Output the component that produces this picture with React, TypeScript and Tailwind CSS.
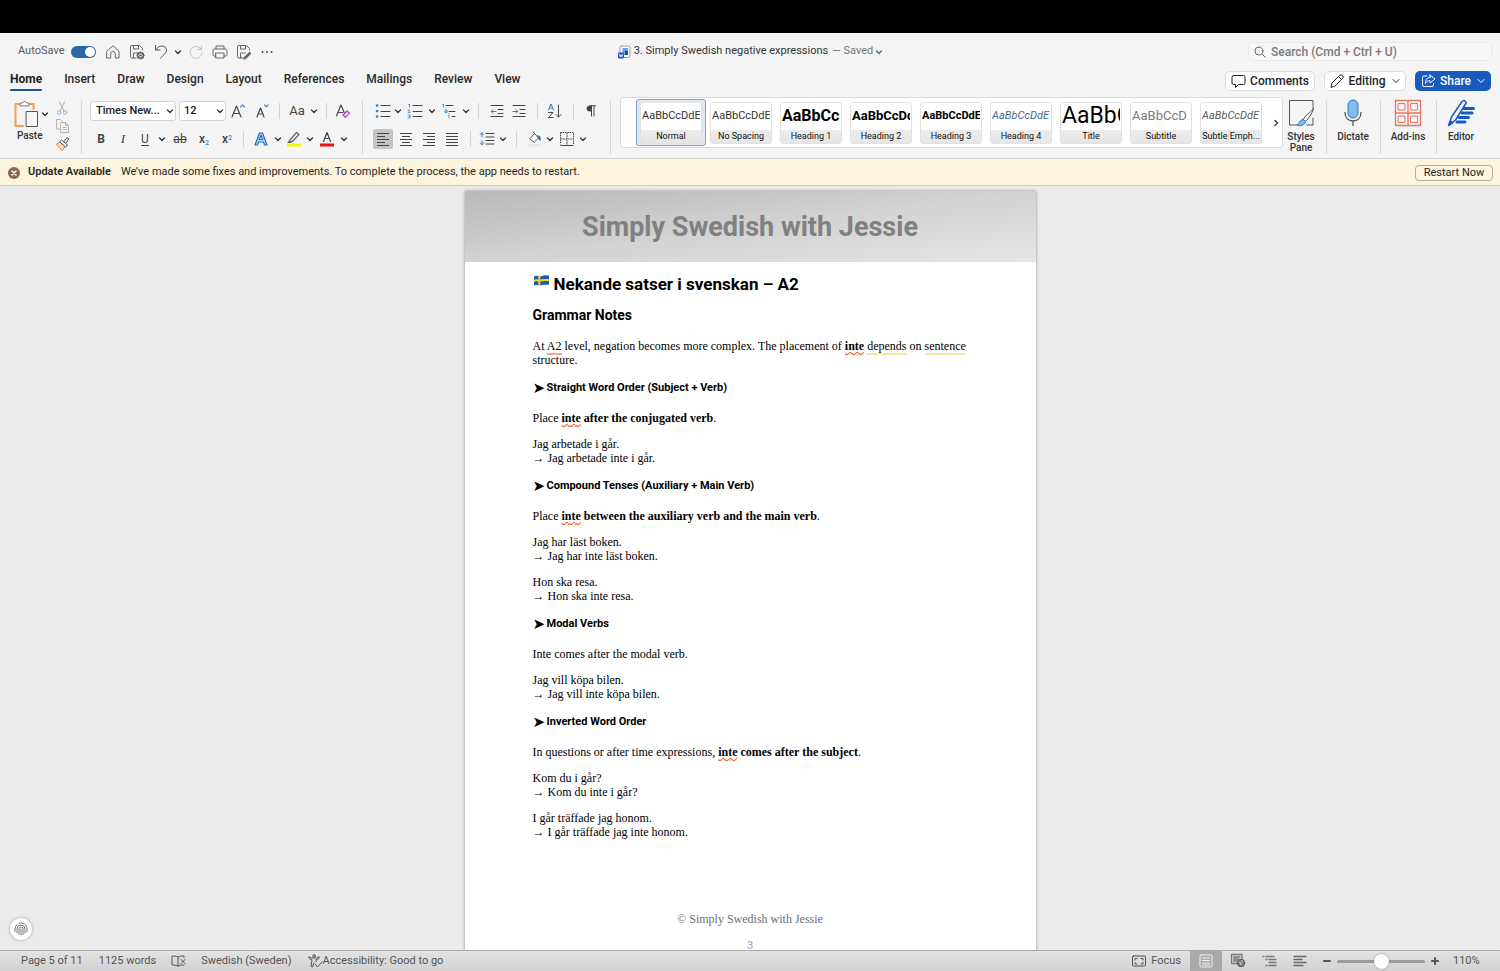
import type { ReactNode } from "react";
import clsx from "clsx";

type IconProps = {
  w?: number;
  h?: number;
  className?: string;
  children: ReactNode;
};

function Icon({ w = 16, h = 16, className, children }: IconProps) {
  return (
    <svg width={w} height={h} viewBox={`0 0 ${w} ${h}`} fill="none" stroke="currentColor" strokeLinecap="round" strokeLinejoin="round" className={clsx("shrink-0", className)} aria-hidden="true">
      {children}
    </svg>
  );
}

function Chevron({ className = "text-[#333]" }: { className?: string }) {
  return (
    <Icon w={8} h={8} className={className}>
      <path d="M1.500 3l2.500 2.500L6.500 3" strokeWidth="1.300" />
    </Icon>
  );
}

type CellProps = {
  label: string;
  className: string;
  children: ReactNode;
};

function Cell({ label, className, children }: CellProps) {
  return (
    <button type="button" aria-label={label} className={clsx("flex h-5 shrink-0 items-center justify-center text-[#444]", className)}>
      {children}
    </button>
  );
}

function Drop({ label, className }: { label: string; className: string }) {
  return (
    <Cell label={label} className={className}>
      <Chevron />
    </Cell>
  );
}

function Split({ className }: { className: string }) {
  return (
    <div className={clsx("flex shrink-0 justify-center", className)}>
      <div className="h-4 w-px bg-[#d2d2d2]" />
    </div>
  );
}

function GroupRule({ className }: { className: string }) {
  return (
    <div className={clsx("flex shrink-0 justify-center", className)}>
      <div className="mt-1 h-[54px] w-px bg-[#d8d8d8]" />
    </div>
  );
}

function Floppy() {
  return <path d="M13.500 6V4.500l-3-3H3A1.500 1.500 0 0 0 1.500 3v9.500A1.500 1.500 0 0 0 3 14h4M4.500 1.500V5h5V1.500M4.500 14V9h5" />;
}

function TitleBar() {
  return (
    <div className="grid h-[33px] shrink-0 grid-cols-[1fr_auto_1fr] items-center px-2 pt-1">
      <div className="flex items-center pl-[10px] text-[#5c5c5c]">
        <label htmlFor="autosave" className="w-[53px] text-[11px]">AutoSave</label>
        <span className="relative flex h-3 w-[25px] items-center">
          <input id="autosave" type="checkbox" role="switch" defaultChecked className="h-3 w-[25px] appearance-none rounded-full bg-[#2b66a8]" />
          <span className="pointer-events-none absolute right-px h-[10px] w-[10px] rounded-full bg-white" />
        </span>
        <Cell label="Home" className="ml-2 w-[18px]">
          <Icon className="text-[#666]"><path d="M2 7l6-5.300L14 7v7h-3.700V9.800a2.300 2.300 0 0 0-4.600 0V14H2z" /></Icon>
        </Cell>
        <Cell label="Save" className="ml-[6px] w-[18px]">
          <Icon className="text-[#666]">
            <Floppy />
            <circle cx="11.500" cy="11.500" r="3.500" fill="#666" />
            <path d="M9.800 11.300a1.800 1.800 0 0 1 3.200-.6M13.200 11.700a1.800 1.800 0 0 1-3.200.6" stroke="#fff" strokeWidth=".9" />
          </Icon>
        </Cell>
        <Cell label="Undo" className="ml-[6px] w-[18px]">
          <Icon className="text-[#555]"><path d="M2.500 1.500V6H7M2.500 6c2-2.500 4-4 6.500-4s4.500 2 4.500 4.200c0 2.300-2.500 4.500-6 7.800" /></Icon>
        </Cell>
        <Drop label="Undo history" className="ml-[2px] w-3" />
        <Cell label="Redo" className="ml-[3px] w-[18px]">
          <Icon className="text-[#c6c6c6]"><path d="M13.500 2v3.500H10M13.300 5.500A6 6 0 1 0 14 9" /></Icon>
        </Cell>
        <Cell label="Print" className="ml-[6px] w-[18px]">
          <Icon className="text-[#666]"><path d="M4 5V2h8v3M4 12H2.500A1.500 1.500 0 0 1 1 10.500v-4A1.500 1.500 0 0 1 2.500 5h11A1.500 1.500 0 0 1 15 6.500v4a1.500 1.500 0 0 1-1.500 1.500H12M4 9h8v5H4z" /></Icon>
        </Cell>
        <Cell label="Save as" className="ml-[6px] w-[18px]">
          <Icon className="text-[#666]">
            <Floppy />
            <path d="M8.500 13.500l5-5 1 1-5 5-1.700.4z" fill="#555" strokeWidth="1.300" />
          </Icon>
        </Cell>
        <Cell label="More" className="ml-[5px] w-[18px]">
          <Icon w={14} h={4}><path d="M2.500 2h.1M7 2h.1M11.500 2h.1" strokeWidth="1.800" /></Icon>
        </Cell>
      </div>
      <button type="button" className="flex items-center text-[11px] text-[#333]">
        <Icon w={14} h={14} className="mr-[3px]">
          <rect x="3" y="1" width="10" height="11.500" rx="1.500" fill="#fff" stroke="#9a9a9a" />
          <path d="M5.500 3h5.500v7H5.500z" fill="#5ea5ee" stroke="none" />
          <path d="M8 6h3v4H8z" fill="#1b4fb0" stroke="none" />
          <rect x="1" y="7.500" width="6" height="6" rx="1" fill="#1c59c4" stroke="none" />
          <path d="M2.300 9.300l.8 2.500.9-2 .9 2 .8-2.500" stroke="#fff" strokeWidth=".8" />
        </Icon>
        <span>3. Simply Swedish negative expressions</span>
        <span className="ml-1 text-[#777]">— Saved</span>
        <Chevron className="ml-[2px] text-[#666]" />
      </button>
      <label className="flex h-[19px] w-[244px] items-center justify-self-end rounded-[5px] border border-[#e9e9e9] bg-[#f6f6f6] pl-[5px]">
        <Icon w={12} h={12} className="mr-[5px] text-[#666]"><circle cx="5" cy="5" r="4" /><path d="M8 8l3.300 3.300" /></Icon>
        <input type="search" aria-label="Search" placeholder="Search (Cmd + Ctrl + U)" className="min-w-0 flex-1 bg-transparent text-[12px] font-medium placeholder:text-[#7b7b7b]" />
      </label>
    </div>
  );
}

const tabs = ["Insert", "Draw", "Design", "Layout", "References", "Mailings", "Review", "View"];

function TabBar() {
  return (
    <div className="flex h-[30px] shrink-0 items-start justify-between pr-[9px] pl-[10px]">
      <nav className="flex gap-[22px] pt-[5px] text-[12px] leading-4 font-medium text-[#2a2a2a]">
        <button type="button" className="flex flex-col font-bold text-[#222]">
          Home
          <span className="mt-[2px] h-[2px] w-full rounded-full bg-[#1d4f91]" />
        </button>
        {tabs.map((tab) => (
          <button key={tab} type="button" className="self-start">{tab}</button>
        ))}
      </nav>
      <div className="flex gap-[9px] pt-[5px] text-[12px] font-medium text-[#1f1f1f]">
        <button type="button" className="flex h-5 w-[90px] items-center justify-center gap-1 rounded-[5px] border border-[#dcdcdc] bg-white">
          <Icon w={15} h={15}><path d="M2.500 1.500h10a1.500 1.500 0 0 1 1.500 1.500v6a1.500 1.500 0 0 1-1.500 1.500H7.500L4.500 13.500v-3h-2A1.500 1.500 0 0 1 1 9V3a1.500 1.500 0 0 1 1.500-1.500z" /></Icon>
          Comments
        </button>
        <button type="button" className="flex h-5 w-[82px] items-center justify-center gap-1 rounded-[5px] border border-[#dcdcdc] bg-white">
          <Icon w={14} h={14}><path d="M1 13l1-4 7.500-7.500a1.800 1.800 0 0 1 3 3L5 12zM8.500 2.500l3 3" /></Icon>
          Editing
          <Icon w={8} h={8} className="ml-[2px]"><path d="M1 2.500l3 3 3-3" /></Icon>
        </button>
        <button type="button" className="flex h-5 w-[76px] items-center justify-center gap-1 rounded-[5px] bg-[#185abd] text-white">
          <Icon w={15} h={14}><path d="M6 2H3a1.500 1.500 0 0 0-1.500 1.500V11A1.500 1.500 0 0 0 3 12.500h8a1.500 1.500 0 0 0 1.500-1.500v-1.500M9 1l5 4-5 4V6.500C7 6.500 5.500 7.500 4.500 9.500c0-3.500 1.500-6 4.500-6z" /></Icon>
          Share
          <Icon w={8} h={8} className="ml-[2px]"><path d="M1 2.500l3 3 3-3" /></Icon>
        </button>
      </div>
    </div>
  );
}

function Clipboard() {
  return (
    <div className="flex shrink-0 pl-3">
      <button type="button" aria-label="Paste" className="flex w-[38px] flex-col items-start pt-[3px] text-[10px] leading-3 font-medium text-[#333]">
        <span className="flex items-center">
          <Icon w={29} h={30}>
            <path d="M11 27H3.500V5H8M17 5h4.500v5" stroke="#f2a04a" strokeWidth="2" />
            <path d="M8 6.500V4h2a3 3 0 0 1 5 0h2v2.500z" fill="#fff" stroke="#777" />
            <rect x="14.500" y="12.500" width="11" height="15" fill="#f6f6f6" stroke="#555" />
          </Icon>
          <Chevron />
        </span>
        <span className="mt-px ml-[5px]">Paste</span>
      </button>
      <div className="ml-[2px] flex w-5 flex-col items-center pt-[3px]">
        <button type="button" aria-label="Cut" className="h-[18px]">
          <Icon w={12} h={15}>
            <path d="M3.500 1l4.500 9M8.500 1L4 10" stroke="#aaa" />
            <circle cx="3" cy="11.500" r="1.800" stroke="#8dbce8" />
            <circle cx="9" cy="11.500" r="1.800" stroke="#8dbce8" />
          </Icon>
        </button>
        <button type="button" aria-label="Copy" className="h-[18px]">
          <Icon w={15} h={16} className="text-[#b5b5b5]">
            <path d="M5 11H1.500V1.500h4l2 2M6 4.500h4.500l3 3v7H6zM10.500 4.500v3h3M8 9.500h3.500M8 11.500h3.500" />
          </Icon>
        </button>
        <button type="button" aria-label="Format painter" className="h-[18px]">
          <Icon w={15} h={16}>
            <path d="M1.500 8l3.500-2 5 4.500-2.500 4L4.500 12z" fill="#fbd9b8" stroke="#e8883a" />
            <path d="M5 5.500l1.500-1.500 6 5-1.500 2zM9 5.500l3-4 1.800 1.200L11 7" stroke="#555" fill="#f4f4f4" />
          </Icon>
        </button>
      </div>
    </div>
  );
}

function FontGroup() {
  return (
    <div className="flex shrink-0 flex-col gap-2 pt-[5px]">
      <div className="flex items-center">
        <span className="relative flex items-center">
          <select aria-label="Font" className="h-5 w-[86px] appearance-none rounded-[3px] border border-[#d5d5d5] bg-white pl-[5px] text-[11px] font-medium text-[#222]">
            <option>Times New...</option>
          </select>
          <Chevron className="pointer-events-none absolute right-[2px] text-[#333]" />
        </span>
        <span className="relative ml-[3px] flex items-center">
          <select aria-label="Font size" className="h-5 w-[47px] appearance-none rounded-[3px] border border-[#d5d5d5] bg-white pl-[4px] text-[11px] font-medium text-[#222]">
            <option>12</option>
          </select>
          <Chevron className="pointer-events-none absolute right-[2px] text-[#333]" />
        </span>
        <Cell label="Grow font" className="w-6">
          <Icon w={14} h={16}><path d="M1 14L5.500 3 10 14M2.500 10.500h6" strokeWidth="1.200" /><path d="M9.500 4l2-2 2 2" stroke="#3a8fd9" strokeWidth="1.200" /></Icon>
        </Cell>
        <Cell label="Shrink font" className="w-6">
          <Icon w={14} h={16}><path d="M2 14l3.500-9L9 14M3.300 11h4.500" strokeWidth="1.200" /><path d="M9.500 2l1.800 1.800L13 2" stroke="#3a8fd9" strokeWidth="1.200" /></Icon>
        </Cell>
        <Split className="w-[10px]" />
        <Cell label="Change case" className="w-[26px] text-[13px]">Aa</Cell>
        <Drop label="Change case options" className="w-2" />
        <Split className="w-4" />
        <Cell label="Clear formatting" className="w-[18px]">
          <Icon><path d="M1.500 13L6 2l3.200 7.500M3 9.500h4.500" strokeWidth="1.200" /><path d="M8 12l4-4 2.500 2.200-4 4z" fill="#f4e3f6" stroke="#a84ab5" strokeWidth="1.200" /></Icon>
        </Cell>
      </div>
      <div className="flex items-center text-[12px]">
        <Cell label="Bold" className="w-[22px] font-bold">B</Cell>
        <Cell label="Italic" className="w-[22px] font-['Liberation_Serif',serif] text-[13px] italic">I</Cell>
        <Cell label="Underline" className="w-[22px] underline underline-offset-2">U</Cell>
        <Drop label="Underline styles" className="w-3" />
        <Cell label="Strikethrough" className="w-6 text-[12px] line-through">ab</Cell>
        <Cell label="Subscript" className="w-6 font-medium"><span>x<sub className="text-[7px] text-[#2b8be0]">2</sub></span></Cell>
        <Cell label="Superscript" className="w-[22px] font-medium"><span>x<sup className="text-[7px] text-[#2b8be0]">2</sup></span></Cell>
        <Split className="w-[10px]" />
        <Cell label="Text effects" className="w-[26px]">
          <Icon><path d="M2 14L6.500 2h3L14 14h-2.500l-1-3h-5l-1 3zM6.300 8.500h3.400L8 4z" fill="#b9dcf8" stroke="#1f6fc4" strokeWidth="1.200" /></Icon>
        </Cell>
        <Drop label="Text effect options" className="w-2" />
        <Cell label="Highlight" className="w-6">
          <Icon><path d="M4 9l6.500-7.500L13 3.500 6.500 10.500H4zM4 9l-2 2.500h3" fill="#f4f4f4" stroke="#666" strokeWidth="1.200" /><path d="M1 12.500h14v3H1z" fill="#fdf500" stroke="none" /></Icon>
        </Cell>
        <Drop label="Highlight colours" className="w-2" />
        <Cell label="Font colour" className="w-[26px]">
          <Icon><path d="M4.500 10.500L8 1.500l3.500 9M5.700 7.500h4.600" strokeWidth="1.200" /><path d="M1 12.500h14v3H1z" fill="#ee1111" stroke="none" /></Icon>
        </Cell>
        <Drop label="Font colours" className="w-2" />
      </div>
    </div>
  );
}

function Lines({ d }: { d: string }) {
  return (
    <Icon w={14} h={14}><path d={d} strokeLinecap="butt" /></Icon>
  );
}

function ParagraphGroup() {
  return (
    <div className="flex shrink-0 flex-col gap-2 pt-[5px]">
      <div className="flex items-center">
        <Cell label="Bullets" className="w-5">
          <Icon><path d="M6 2.500h9M6 8.500h9M6 13.500h9" /><path d="M2 2.500h.1M2 8h.1M2 13.500h.1" stroke="#2f7fd0" strokeWidth="2.600" /></Icon>
        </Cell>
        <Drop label="Bullet library" className="w-[10px]" />
        <Cell label="Numbering" className="w-6">
          <Icon><path d="M6 2.500h9M6 8.500h9M6 13.500h9" /><path d="M1.500 1.500l1-.5v3M1 7h1.500v1L1 9.500h2M1 12h2v1.500H2h1V15H1" stroke="#2f8fdf" strokeWidth=".9" /></Icon>
        </Cell>
        <Drop label="Number library" className="w-[10px]" />
        <Cell label="Multilevel list" className="w-6">
          <Icon><path d="M5 2.500h7M8 8.500h6M11 13.500h3" /><path d="M1.500 1.500l1-.5v3M4 7h2v2.500H4V8h2M8 12v3M8 10.500v.1" stroke="#2f8fdf" strokeWidth=".9" /></Icon>
        </Cell>
        <Drop label="List library" className="w-[10px]" />
        <Split className="w-[14px]" />
        <Cell label="Decrease indent" className="w-6">
          <Icon w={14} h={14}><path d="M1 1.500h12M8 5.500h5M8 9.500h5M1 12.500h12" /><path d="M6 7.500H1.500M3 5.700L1.200 7.500 3 9.300" stroke="#2f7fd0" /></Icon>
        </Cell>
        <Cell label="Increase indent" className="w-5">
          <Icon w={14} h={14}><path d="M1 1.500h12M8 5.500h5M8 9.500h5M1 12.500h12" /><path d="M1 7.500h4.500M4 5.700l1.800 1.800L4 9.300" stroke="#2f7fd0" /></Icon>
        </Cell>
        <Split className="w-4" />
        <Cell label="Sort" className="w-5">
          <Icon><path d="M1.500 7L4 1l2.500 6M2.300 5h3.400" stroke="#2f7fd0" /><path d="M1.500 9.500h4.500L1.500 14.500H6M11.500 2v12M9 11.500l2.500 2.500 2.500-2.500" /></Icon>
        </Cell>
        <Split className="w-4" />
        <Cell label="Show paragraph marks" className="w-5">
          <Icon w={12} h={14}><path d="M6 2H4.500a2.500 2.500 0 0 0 0 5H6z" fill="#444" /><path d="M6.500 2v10M9 2v10M5 1.700h5.500" /></Icon>
        </Cell>
      </div>
      <div className="flex items-center">
        <Cell label="Align left" className="w-5 rounded-[2px] bg-[#c4c4c4]"><Lines d="M1 1.500h12M1 4.500h8M1 7.500h12M1 10.500h8M1 13.500h12" /></Cell>
        <Cell label="Align centre" className="w-[26px]"><Lines d="M1 1.500h12M3 4.500h8M1 7.500h12M3 10.500h8M1 13.500h12" /></Cell>
        <Cell label="Align right" className="w-5"><Lines d="M1 1.500h12M5 4.500h8M1 7.500h12M5 10.500h8M1 13.500h12" /></Cell>
        <Cell label="Justify" className="w-[26px]"><Lines d="M1 1.500h12M1 4.500h12M1 7.500h12M1 10.500h12M1 13.500h12" /></Cell>
        <Split className="w-[10px]" />
        <Cell label="Line spacing" className="w-6">
          <Icon><path d="M7 2.500h8M7 6h8M7 9.500h8M7 13h8" /><path d="M3 2v4M1.200 3.500L3 1.700l1.800 1.800M3 9.500v4M1.200 12L3 13.800 4.800 12" stroke="#2f7fd0" /></Icon>
        </Cell>
        <Drop label="Line spacing options" className="w-2" />
        <Split className="w-[18px]" />
        <Cell label="Shading" className="w-5">
          <Icon><path d="M3 7.500l4.500-5 4 4.500-4 4zM7.500 2.500L6.500 1" stroke="#555" fill="#fff" /><path d="M11 4.500c2 .5 2.500 2 2.300 5-1-.5-1.500-1.500-1.800-2.500z" fill="#1f5fb4" stroke="#1f5fb4" strokeWidth=".6" /><path d="M1 13h13v2.500H1z" fill="#e9e9e9" stroke="none" /></Icon>
        </Cell>
        <Drop label="Shading colours" className="w-[10px]" />
        <Cell label="Borders" className="w-6">
          <Icon w={14} h={14}><path d="M.5.500h13v12M.5.500v12M7 1v12M1 7h12" strokeDasharray="1.500 .8" strokeLinecap="butt" /><path d="M.5 13.500h13" strokeLinecap="butt" /></Icon>
        </Cell>
        <Drop label="Border options" className="w-2" />
      </div>
    </div>
  );
}

type StyleTile = {
  name: string;
  sample: string;
  look: string;
};

const styleTiles: StyleTile[] = [
  { name: "Normal", sample: "AaBbCcDdE", look: "text-[11px] text-[#333]" },
  { name: "No Spacing", sample: "AaBbCcDdE", look: "text-[11px] text-[#333]" },
  { name: "Heading 1", sample: "AaBbCc", look: "text-[16px] font-bold text-black" },
  { name: "Heading 2", sample: "AaBbCcDd", look: "text-[13px] font-bold text-black" },
  { name: "Heading 3", sample: "AaBbCcDdE", look: "text-[11px] font-bold text-black" },
  { name: "Heading 4", sample: "AaBbCcDdE", look: "text-[11px] text-[#3f6c8c] italic" },
  { name: "Title", sample: "AaBbC", look: "text-[23px] text-black" },
  { name: "Subtitle", sample: "AaBbCcD", look: "text-[13px] text-[#7a7a7a]" },
  { name: "Subtle Emph...", sample: "AaBbCcDdE", look: "text-[11px] text-[#5c5c5c] italic" },
];

function StylesGallery() {
  return (
    <div className="mt-px flex h-[51px] min-w-0 flex-1 items-center justify-between rounded-[3px] border border-[#dadada] bg-white pr-[2px] pl-[15px]">
      <div className="flex min-w-0 overflow-hidden">
        {styleTiles.map((tile, i) => (
          <button key={tile.name} type="button" className={clsx("flex h-[47px] w-[70px] shrink-0 items-center justify-center rounded-[3px] border", i === 0 ? "border-[#7fa3d6] bg-[#dfe7f3]" : "border-transparent")}>
            <span className="flex h-[42px] w-[62px] flex-col overflow-hidden rounded-[3px] border border-[#e2e2e2] bg-linear-to-b from-[#f6f6f6] to-[#e6e6e6]">
              <span className="flex h-[27px] items-center overflow-hidden bg-white px-px">
                <span className={clsx("w-[58px] overflow-hidden text-left leading-7 whitespace-nowrap", tile.look)}>{tile.sample}</span>
              </span>
              <span className="text-center text-[9px] leading-3 whitespace-nowrap text-[#111]">{tile.name}</span>
            </span>
          </button>
        ))}
      </div>
      <button type="button" aria-label="More styles">
        <Icon w={8} h={8} className="text-[#333]"><path d="M3 1.500L5.500 4 3 6.500" strokeWidth="1.400" /></Icon>
      </button>
    </div>
  );
}

function BigButton({ label, className, children }: CellProps) {
  return (
    <button type="button" className={clsx("flex shrink-0 flex-col items-center pt-[3px] text-center text-[10px] leading-[11px] font-medium text-[#333]", className)}>
      {children}
      <span className="mt-1">{label}</span>
    </button>
  );
}

function Ribbon() {
  return (
    <div className="flex h-[63px] shrink-0 items-start border-b border-[#d4d4d4]">
      <Clipboard />
      <GroupRule className="w-[18px]" />
      <FontGroup />
      <GroupRule className="w-[21px]" />
      <ParagraphGroup />
      <GroupRule className="w-[19px]" />
      <StylesGallery />
      <BigButton label="Styles Pane" className="w-[36px]">
        <Icon w={28} h={28}>
          <path d="M26 10V1.500H2.500V26H9M20 26h6v-7" stroke="#555" />
          <path d="M26.500 10c-4 3-8 7-10.500 10.500l2.500 2C21.500 19.500 25 15 26.500 10z" fill="#f4f4f4" stroke="#555" />
          <path d="M15.500 20.500c-3 0-2.500 4.500-6 5.500 3.500 1.500 8.500.5 9-3.500z" fill="#7dbaf0" stroke="#2b78c4" />
        </Icon>
      </BigButton>
      <GroupRule className="w-[14px]" />
      <BigButton label="Dictate" className="w-10">
        <Icon w={28} h={28}>
          <rect x="9" y="1" width="10" height="18" rx="5" fill="#83bdee" stroke="#2b78c4" />
          <path d="M6 13.500c0 5.500 3.500 8.500 8 8.500s8-3 8-8.500M14 22v4.500" stroke="#555" strokeWidth="1.300" />
        </Icon>
      </BigButton>
      <GroupRule className="w-[14px]" />
      <BigButton label="Add-ins" className="w-[42px]">
        <Icon w={28} h={28} className="text-[#e8755f]">
          <path d="M1.500 1.500h25v25h-25zM14 1.500v25M1.500 14h25" strokeWidth="1.300" />
          <path d="M4.500 4.500h6.500v6.500H4.500zM17 4.500h6.500v6.500H17zM4.500 17h6.500v6.500H4.500zM17 17h6.500v6.500H17z" />
        </Icon>
      </BigButton>
      <GroupRule className="w-[14px]" />
      <BigButton label="Editor" className="mr-[21px] w-9">
        <Icon w={28} h={28} className="text-[#185abd]">
          <path d="M17 9.500h9.500M15 14h10M12 18.500h9.500M10 23h8" strokeWidth="3" />
          <path d="M1.500 26.500l3-8.500L15 2.500a2 2 0 0 1 3.500 2.500L8.500 21z" fill="#f4f4f4" strokeWidth="1.500" />
          <path d="M1.500 26.500l2-5 2.500 2z" fill="#185abd" />
        </Icon>
      </BigButton>
    </div>
  );
}

function UpdateBanner() {
  return (
    <div className="flex h-[27px] shrink-0 items-center border-b border-[#d3cbb4] bg-[#fdf4dd] pt-px pr-[7px] pl-2 text-[11px] text-[#262626]">
      <button type="button" aria-label="Dismiss">
        <Icon w={12} h={12}><circle cx="6" cy="6" r="6" fill="#87684a" stroke="none" /><path d="M4 4l4 4M8 4L4 8" stroke="#fff" strokeWidth="1.500" /></Icon>
      </button>
      <strong className="ml-2 font-semibold">Update Available</strong>
      <span className="ml-[10px] flex-1">We’ve made some fixes and improvements. To complete the process, the app needs to restart.</span>
      <button type="button" className="h-4 w-[78px] rounded-[4px] border border-[#b5ad98] leading-[14px]">Restart Now</button>
    </div>
  );
}

function Flagged({ children }: { children: ReactNode }) {
  return (
    <span className="border-b-2 border-[#fbe3a0]">
      <span className="underline decoration-[#e0413a] decoration-wavy decoration-1 underline-offset-1">{children}</span>
    </span>
  );
}

type Section = {
  heading: string;
  rule: ReactNode;
  examples: [string, string][];
};

const sections: Section[] = [
  {
    heading: "Straight Word Order (Subject + Verb)",
    rule: <>Place <b><Flagged>inte</Flagged> after the conjugated verb</b>.</>,
    examples: [["Jag arbetade i går.", "Jag arbetade inte i går."]],
  },
  {
    heading: "Compound Tenses (Auxiliary + Main Verb)",
    rule: <>Place <b><Flagged>inte</Flagged> between the auxiliary verb and the main verb</b>.</>,
    examples: [
      ["Jag har läst boken.", "Jag har inte läst boken."],
      ["Hon ska resa.", "Hon ska inte resa."],
    ],
  },
  {
    heading: "Modal Verbs",
    rule: "Inte comes after the modal verb.",
    examples: [["Jag vill köpa bilen.", "Jag vill inte köpa bilen."]],
  },
  {
    heading: "Inverted Word Order",
    rule: <>In questions or after time expressions, <b><Flagged>inte</Flagged> comes after the subject</b>.</>,
    examples: [
      ["Kom du i går?", "Kom du inte i går?"],
      ["I går träffade jag honom.", "I går träffade jag inte honom."],
    ],
  },
];

function DocumentPage() {
  return (
    <article className="mx-auto mt-[5px] w-[571px] bg-white pb-20 font-['Liberation_Serif',serif] text-[12px] leading-[14px] text-black shadow-[0_0_3px_rgba(0,0,0,0.4)]">
      <header className="flex h-[71px] items-center justify-center bg-linear-to-br from-[#b8b8b8] via-[#d2d2d2] to-[#e6e6e6] font-['Roboto',sans-serif] text-[27px] font-bold text-[#808080]">
        Simply Swedish with Jessie
      </header>
      <div className="px-[68px] pt-3">
        <h1 className="flex items-center gap-1 font-['Roboto',sans-serif] text-[17px] leading-5 font-bold">
          <Icon w={17} h={14} className="self-start">
            <path d="M1 2.500c3-2 5 1 8-.5 3-1.500 5 0 7-.5v9c-3 1-4-.5-7 .5s-5-1-8 .5z" fill="#1b5fa8" stroke="none" />
            <path d="M6.300 1.800v9.400M1 6.800c3-1.500 5 .5 8-.5 3-1 5 .2 7-.3" stroke="#f7cf2e" strokeWidth="2" strokeLinecap="butt" />
          </Icon>
          Nekande satser i svenskan – A2
        </h1>
        <h2 className="mt-3 font-['Roboto',sans-serif] text-[14px] leading-[18px] font-bold">Grammar Notes</h2>
        <p className="mt-[15px]">
          At <span className="border-b-2 border-[#f3a29b]">A2</span> level, negation becomes more complex. The placement of <b><Flagged>inte</Flagged></b>{" "}
          <span className="border-b-2 border-[#fbe3a0]">depends</span> on <span className="border-b-2 border-[#fbe3a0]">sentence</span> structure.
        </p>
        {sections.map((section) => (
          <section key={section.heading}>
            <h3 className="mt-[14px] mb-4 flex h-[14px] items-center font-['Roboto',sans-serif] text-[11px] font-bold">
              <span className="w-[14px] font-['DejaVu_Sans',sans-serif] text-[15px] leading-[14px] font-normal">➤</span>
              {section.heading}
            </h3>
            <p>{section.rule}</p>
            {section.examples.map(([plain, negated]) => (
              <p key={plain} className="mt-3">
                {plain}
                <br />→ {negated}
              </p>
            ))}
          </section>
        ))}
      </div>
      <footer className="mt-[73px] text-center text-[#6f6f6f]">
        <p>© Simply Swedish with Jessie</p>
        <p className="mt-[13px] font-['Roboto',sans-serif] text-[11px] text-[#7fa5d3]">3</p>
      </footer>
    </article>
  );
}

function StatusBar() {
  return (
    <footer className="flex h-[21px] shrink-0 items-center border-t border-[#aaa] bg-linear-to-b from-[#e2e2e2] to-[#d2d2d2] pr-5 pl-[21px] text-[11px] text-[#555]">
      <span>Page 5 of 11</span>
      <span className="ml-4">1125 words</span>
      <button type="button" aria-label="Proofing" className="ml-[15px]">
        <Icon w={15} h={14}><path d="M7 3v9M7 12c-2-1-4-1-6-1V2c2 0 4 0 6 1 1.500-1 3.500-1 6-1v1.500M7 12c1.500-1 3.500-1 6-1M10 5.500l4 4M14 5.500l-4 4" /></Icon>
      </button>
      <button type="button" className="ml-[15px]">Swedish (Sweden)</button>
      <button type="button" className="ml-[15px] flex items-center">
        <Icon w={16} h={14}><circle cx="7" cy="2" r="1.300" /><path d="M2 3c-1 1 0 2 3 2.500L4 12.500l1.500.5L7 9M12 3c1 1 0 2-3 2.500v2M2 3c2 .8 3 1 5 1s3-.2 5-1M8.500 10.500l2 2.500 4.500-5" /></Icon>
        Accessibility: Good to go
      </button>
      <button type="button" className="mr-[9px] ml-auto flex items-center gap-[5px]">
        <Icon w={14} h={12}><rect x=".5" y="1" width="13" height="10" rx="1" /><path d="M3 5V3.500h2M9 3.500h2V5M11 7.500V9H9M5 9H3V7.500" /></Icon>
        Focus
      </button>
      <button type="button" aria-label="Print layout" className="flex h-full w-8 items-center justify-center bg-[#a9a9a9]">
        <Icon w={14} h={14} className="text-[#f0f0f0]"><rect x="1" y="1" width="12" height="12" rx="1" /><path d="M3.500 4h7M3.500 6.500h7M3.500 9h7M3.500 11h7" /></Icon>
      </button>
      <button type="button" aria-label="Web layout" className="ml-2 text-[#777]">
        <Icon><path d="M12 6V1.500H1.500v9H7M3.500 4h6.500M3.500 6h5M3.500 8H7" strokeWidth="1.300" /><circle cx="11" cy="10" r="3.700" fill="#777" stroke="#555" /><path d="M9 9l2 1v2M11.500 7.500l1.500 1.500" stroke="#ddd" /></Icon>
      </button>
      <button type="button" aria-label="Outline" className="ml-4 text-[#777]">
        <Icon w={15} h={12}><path d="M1 1.500h1M4 1.500h8M4 4.500h1M7 4.500h7M7 7.500h7M4 10.500h1M7 10.500h7" strokeWidth="1.300" /></Icon>
      </button>
      <button type="button" aria-label="Draft" className="ml-4 text-[#666]">
        <Icon w={14} h={12}><path d="M1 1.500h12M1 4.500h8M1 7.500h12M1 10.500h9" strokeWidth="1.300" /></Icon>
      </button>
      <button type="button" aria-label="Zoom out" className="ml-4"><Icon w={8} h={8}><path d="M1 4h6" strokeWidth="2" /></Icon></button>
      <input type="range" aria-label="Zoom" min={0} max={100} defaultValue={51} className="mx-[6px] h-[3px] w-[88px] appearance-none rounded-full bg-[#9b9b9b] [&::-webkit-slider-thumb]:h-[15px] [&::-webkit-slider-thumb]:w-[15px] [&::-webkit-slider-thumb]:appearance-none [&::-webkit-slider-thumb]:rounded-full [&::-webkit-slider-thumb]:bg-white [&::-webkit-slider-thumb]:shadow-[0_0_2px_rgba(0,0,0,0.4)]" />
      <button type="button" aria-label="Zoom in"><Icon w={8} h={8}><path d="M1 4h6M4 1v6" strokeWidth="2" /></Icon></button>
      <span className="ml-[14px] w-[27px]">110%</span>
    </footer>
  );
}

export default function App() {
  return (
    <div className="flex h-screen flex-col overflow-hidden bg-[#f4f4f4] font-['Roboto',sans-serif]">
      <div className="h-[33px] shrink-0 bg-black" />
      <TitleBar />
      <TabBar />
      <Ribbon />
      <UpdateBanner />
      <main className="relative min-h-0 flex-1 overflow-hidden bg-[#ebebeb]">
        <DocumentPage />
        <button type="button" aria-label="Fingerprint" className="absolute bottom-[10px] left-[10px] flex h-[22px] w-[22px] items-center justify-center rounded-full bg-white shadow-[0_0_3px_rgba(0,0,0,0.35)]">
          <Icon w={14} h={14} className="text-[#555]"><path d="M1 9.500V7a6 6 0 0 1 2-4.500M5 1.200a6 6 0 0 1 8 5.800v2.500M3 11V7a4 4 0 0 1 8 0v4M5 12.500V7a2 2 0 0 1 4 0v5.500M7 7v6" strokeWidth=".8" /></Icon>
        </button>
      </main>
      <StatusBar />
    </div>
  );
}
